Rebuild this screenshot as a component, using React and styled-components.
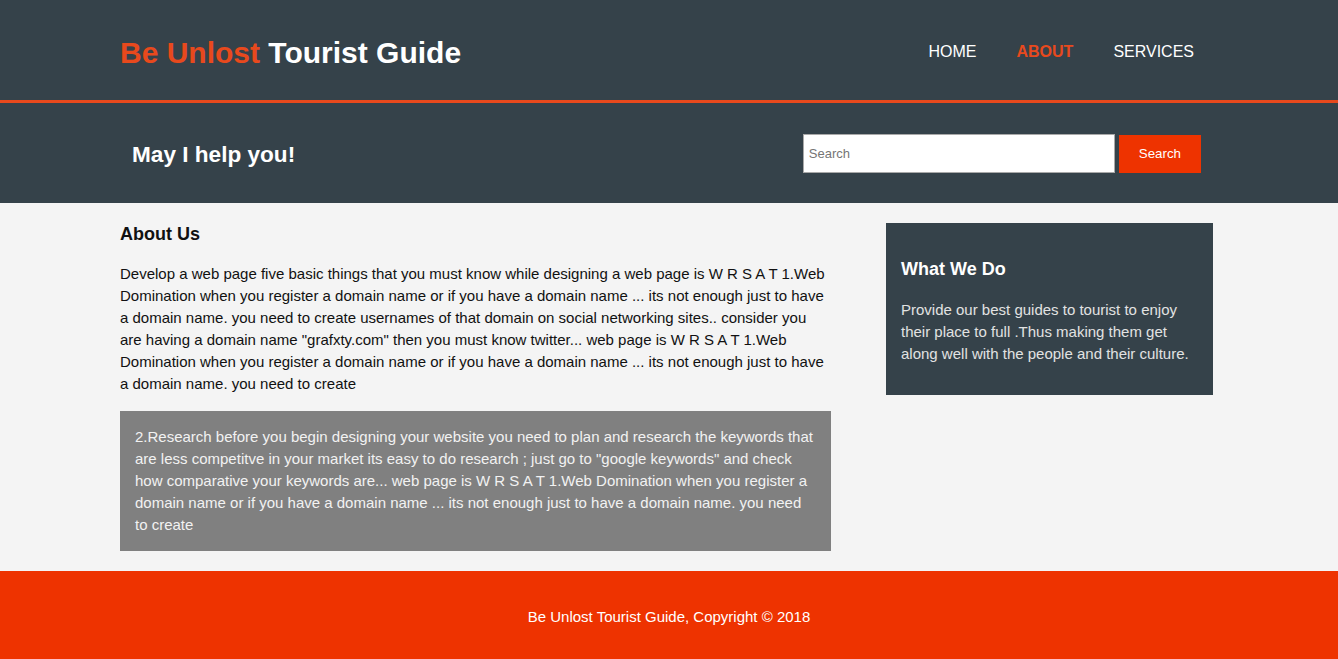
import React from "react";
import styled, { createGlobalStyle } from "styled-components";

const GlobalStyle = createGlobalStyle`
  body {
    margin: 0;
    padding: 0;
    font-family: "Liberation Sans", Arial, Helvetica, sans-serif;
    font-size: 15px;
    line-height: 22px;
    background-color: #f4f4f4;
    color: #111;
  }
`;

const aboutText =
  'Develop a web page five basic things that you must know while designing a web page is W R S A T 1.Web Domination when you register a domain name or if you have a domain name ... its not enough just to have a domain name. you need to create usernames of that domain on social networking sites.. consider you are having a domain name "grafxty.com" then you must know twitter... web page is W R S A T 1.Web Domination when you register a domain name or if you have a domain name ... its not enough just to have a domain name. you need to create';

const researchText =
  '2.Research before you begin designing your website you need to plan and research the keywords that are less competitve in your market its easy to do research ; just go to "google keywords" and check how comparative your keywords are... web page is W R S A T 1.Web Domination when you register a domain name or if you have a domain name ... its not enough just to have a domain name. you need to create';

const App = () => {
  return (
    <>
      <GlobalStyle />
      <Header>
        <Container>
          <HeaderRow>
            <Branding>
              <Highlight>Be Unlost</Highlight> Tourist Guide
            </Branding>
            <Nav>
              <NavItem>
                <NavLink href="#">Home</NavLink>
              </NavItem>
              <NavItem>
                <NavLink href="#" $current>
                  About
                </NavLink>
              </NavItem>
              <NavItem>
                <NavLink href="#">Services</NavLink>
              </NavItem>
            </Nav>
          </HeaderRow>
        </Container>
      </Header>

      <Newsletter>
        <Container>
          <NewsletterRow>
            <HelpTitle>May I help you!</HelpTitle>
            <SearchForm onSubmit={(e) => e.preventDefault()}>
              <SearchInput type="text" placeholder="Search" />
              <SearchButton type="submit">Search</SearchButton>
            </SearchForm>
          </NewsletterRow>
        </Container>
      </Newsletter>

      <Container>
        <MainGrid>
          <MainCol>
            <PageTitle>About Us</PageTitle>
            <Paragraph>{aboutText}</Paragraph>
            <GrayBox>{researchText}</GrayBox>
          </MainCol>
          <Sidebar>
            <DarkCard>
              <CardTitle>What We Do</CardTitle>
              <CardText>
                Provide our best guides to tourist to enjoy their place to full
                .Thus making them get along well with the people and their
                culture.
              </CardText>
            </DarkCard>
          </Sidebar>
        </MainGrid>
      </Container>

      <Footer>
        <FooterText>Be Unlost Tourist Guide, Copyright &copy; 2018</FooterText>
      </Footer>
    </>
  );
};

const Container = styled.div`
  padding: 0 125px 0 120px;
`;

const Header = styled.header`
  background: #35424a;
  color: #ffffff;
  padding-top: 30px;
  min-height: 70px;
  border-bottom: 3px solid #e8491d;
`;

const HeaderRow = styled.div`
  display: flex;
  justify-content: space-between;
  align-items: flex-start;
`;

const Branding = styled.h1`
  margin: 0;
  font-size: 30px;
  line-height: 45px;
  font-weight: bold;
`;

const Highlight = styled.span`
  color: #e8491d;
`;

const Nav = styled.ul`
  display: flex;
  list-style: none;
  margin: 10px -1px 0 0;
  padding: 0;
`;

const NavItem = styled.li`
  padding: 0 20px;
  line-height: 24px;
`;

const NavLink = styled.a`
  color: ${(p) => (p.$current ? "#e8491d" : "#ffffff")};
  font-weight: ${(p) => (p.$current ? "bold" : "normal")};
  text-decoration: none;
  text-transform: uppercase;
  font-size: 16px;
`;

const Newsletter = styled.section`
  background: #35424a;
  color: #ffffff;
`;

const NewsletterRow = styled.div`
  height: 100px;
  padding: 0 12px;
  display: flex;
  justify-content: space-between;
  align-items: center;
`;

const HelpTitle = styled.h1`
  margin: 2px 0 0;
  font-size: 22.6px;
  line-height: 33px;
`;

const SearchForm = styled.form`
  display: flex;
  align-items: center;
  gap: 4px;
`;

const SearchInput = styled.input`
  box-sizing: border-box;
  width: 312px;
  height: 39px;
  padding: 4px 5px;
  border: 1px solid #a9a9a9;
  font-family: "Liberation Sans", Arial, sans-serif;
  font-size: 13px;
  outline: none;

  &::placeholder {
    color: #757575;
  }
`;

const SearchButton = styled.button`
  height: 38px;
  margin-top: 1px;
  background: #ee3300;
  border: 0;
  padding: 0 20px;
  color: #ffffff;
  font-family: "Liberation Sans", Arial, sans-serif;
  font-size: 13.33px;
`;

const MainGrid = styled.div`
  display: flex;
  justify-content: space-between;
  align-items: flex-start;
`;

const MainCol = styled.article`
  width: 711px;
`;

const PageTitle = styled.h2`
  margin: 18px 0 15px;
  font-size: 18px;
  line-height: 27px;
`;

const Paragraph = styled.p`
  margin: 0 0 16px;
`;

const GrayBox = styled.div`
  background: #808080;
  color: #f2f2f2;
  padding: 15px;
  margin-bottom: 20px;
`;

const Sidebar = styled.aside`
  width: 327px;
  margin-top: 20px;
`;

const DarkCard = styled.div`
  background: #35424a;
  color: #ffffff;
  padding: 15px;
`;

const CardTitle = styled.h3`
  margin: 18px 0 16px;
  font-size: 18px;
  line-height: 27px;
`;

const CardText = styled.p`
  margin: 0 0 15px;
  color: #e2e2e2;
`;

const Footer = styled.footer`
  padding: 20px;
  background-color: #ee3300;
  color: #ffffff;
  text-align: center;
`;

const FooterText = styled.p`
  margin: 15px 0;
`;

export default App;
